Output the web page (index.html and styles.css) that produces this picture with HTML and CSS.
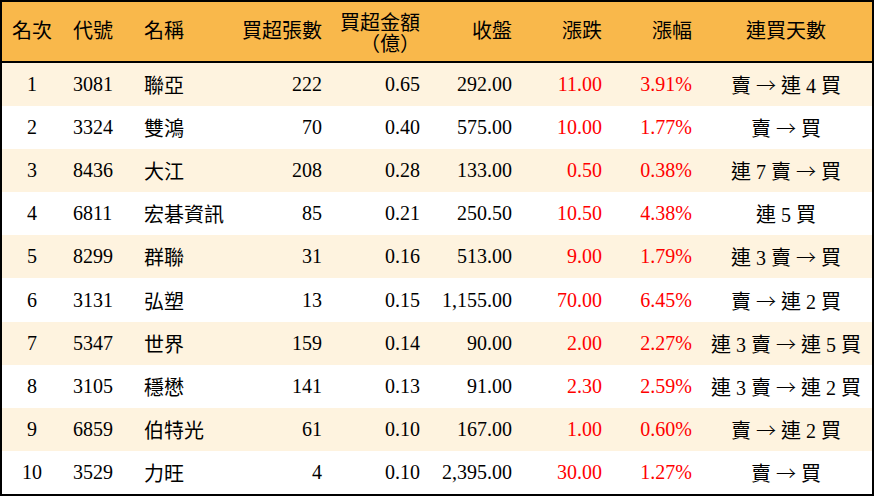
FILE: index.html
```html
<!DOCTYPE html>
<html lang="zh-Hant">
<head>
<meta charset="utf-8">
<link rel="stylesheet" href="styles.css">
</head>
<body>
<div class="board">
  <div class="row head">
    <div class="c ctr">名次</div>
    <div class="c code">代號</div>
    <div class="c name">名稱</div>
    <div class="c r r4">買超張數</div>
    <div class="c r r5 two">買超金額<br>（億）</div>
    <div class="c r r6">收盤</div>
    <div class="c r r7">漲跌</div>
    <div class="c r r8">漲幅</div>
    <div class="c ctr">連買天數</div>
  </div>
  <div class="row alt">
    <div class="c ctr">1</div><div class="c code">3081</div><div class="c name">聯亞</div>
    <div class="c r r4">222</div><div class="c r r5">0.65</div><div class="c r r6">292.00</div>
    <div class="c r r7 red">11.00</div><div class="c r r8 red">3.91%</div><div class="c ctr">賣 <span class="arr">→</span> 連 4 買</div>
  </div>
  <div class="row">
    <div class="c ctr">2</div><div class="c code">3324</div><div class="c name">雙鴻</div>
    <div class="c r r4">70</div><div class="c r r5">0.40</div><div class="c r r6">575.00</div>
    <div class="c r r7 red">10.00</div><div class="c r r8 red">1.77%</div><div class="c ctr">賣 <span class="arr">→</span> 買</div>
  </div>
  <div class="row alt">
    <div class="c ctr">3</div><div class="c code">8436</div><div class="c name">大江</div>
    <div class="c r r4">208</div><div class="c r r5">0.28</div><div class="c r r6">133.00</div>
    <div class="c r r7 red">0.50</div><div class="c r r8 red">0.38%</div><div class="c ctr">連 7 賣 <span class="arr">→</span> 買</div>
  </div>
  <div class="row">
    <div class="c ctr">4</div><div class="c code">6811</div><div class="c name">宏碁資訊</div>
    <div class="c r r4">85</div><div class="c r r5">0.21</div><div class="c r r6">250.50</div>
    <div class="c r r7 red">10.50</div><div class="c r r8 red">4.38%</div><div class="c ctr">連 5 買</div>
  </div>
  <div class="row alt">
    <div class="c ctr">5</div><div class="c code">8299</div><div class="c name">群聯</div>
    <div class="c r r4">31</div><div class="c r r5">0.16</div><div class="c r r6">513.00</div>
    <div class="c r r7 red">9.00</div><div class="c r r8 red">1.79%</div><div class="c ctr">連 3 賣 <span class="arr">→</span> 買</div>
  </div>
  <div class="row">
    <div class="c ctr">6</div><div class="c code">3131</div><div class="c name">弘塑</div>
    <div class="c r r4">13</div><div class="c r r5">0.15</div><div class="c r r6">1,155.00</div>
    <div class="c r r7 red">70.00</div><div class="c r r8 red">6.45%</div><div class="c ctr">賣 <span class="arr">→</span> 連 2 買</div>
  </div>
  <div class="row alt">
    <div class="c ctr">7</div><div class="c code">5347</div><div class="c name">世界</div>
    <div class="c r r4">159</div><div class="c r r5">0.14</div><div class="c r r6">90.00</div>
    <div class="c r r7 red">2.00</div><div class="c r r8 red">2.27%</div><div class="c ctr">連 3 賣 <span class="arr">→</span> 連 5 買</div>
  </div>
  <div class="row">
    <div class="c ctr">8</div><div class="c code">3105</div><div class="c name">穩懋</div>
    <div class="c r r4">141</div><div class="c r r5">0.13</div><div class="c r r6">91.00</div>
    <div class="c r r7 red">2.30</div><div class="c r r8 red">2.59%</div><div class="c ctr">連 3 賣 <span class="arr">→</span> 連 2 買</div>
  </div>
  <div class="row alt">
    <div class="c ctr">9</div><div class="c code">6859</div><div class="c name">伯特光</div>
    <div class="c r r4">61</div><div class="c r r5">0.10</div><div class="c r r6">167.00</div>
    <div class="c r r7 red">1.00</div><div class="c r r8 red">0.60%</div><div class="c ctr">賣 <span class="arr">→</span> 連 2 買</div>
  </div>
  <div class="row">
    <div class="c ctr">10</div><div class="c code">3529</div><div class="c name">力旺</div>
    <div class="c r r4">4</div><div class="c r r5">0.10</div><div class="c r r6">2,395.00</div>
    <div class="c r r7 red">30.00</div><div class="c r r8 red">1.27%</div><div class="c ctr">賣 <span class="arr">→</span> 買</div>
  </div>
</div>
</body>
</html>
```
FILE: styles.css
```css
html, body {
  margin: 0;
  padding: 0;
  background: #ffffff;
}
.board {
  box-sizing: border-box;
  width: 874px;
  height: 496px;
  border: 2px solid #000;
  display: flex;
  flex-direction: column;
  font-family: "Liberation Serif", "Noto Sans CJK TC", serif;
  font-size: 20px;
  color: #000;
  background: #ffffff;
}
.row {
  display: grid;
  grid-template-columns: 60px 72px 96px 102px 98px 92px 90px 88px 172px;
  align-items: center;
  flex: 1 1 0;
  min-height: 0;
  white-space: nowrap;
}
.row.head {
  flex: 0 0 59px;
  background: #f9b84b;
  border-bottom: 2px solid #000;
  line-height: 21px;
}
.row.alt {
  background: #fef3df;
}
.c {
  box-sizing: border-box;
}
.ctr {
  text-align: center;
}
.code {
  padding-left: 11px;
}
.name {
  padding-left: 10px;
}
.r {
  text-align: right;
  padding-right: 10px;
}
.r8 {
  padding-right: 8px;
}
.two {
  padding-top: 4px;
}
.red {
  color: #ff0000;
}
.arr {
  font-family: "Noto Sans CJK TC", sans-serif;
  font-weight: 300;
}
```
